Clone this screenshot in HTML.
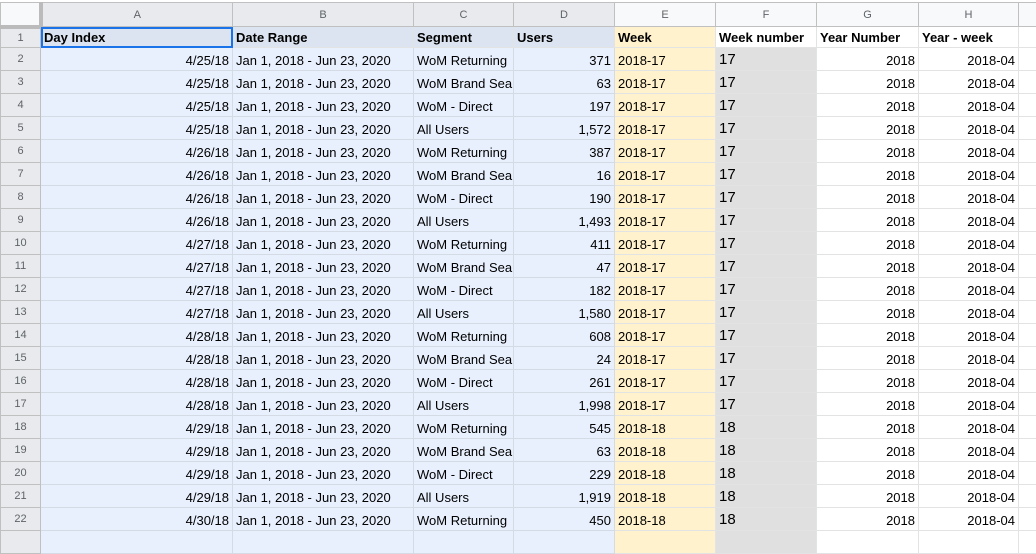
<!DOCTYPE html>
<html><head><meta charset="utf-8"><style>
html,body{margin:0;padding:0;background:#fff;overflow:hidden;width:1036px;height:536px}
table{border-collapse:collapse;table-layout:fixed;width:1048px;position:absolute;left:0;top:2px;font-family:"Liberation Sans",Arial,sans-serif;font-size:13px;color:#000}
td{border:1px solid #e2e3e3;padding:0 3px 2px 3px;height:23px;white-space:nowrap;overflow:hidden;box-sizing:border-box;vertical-align:bottom}
tr.h td{height:24px;background:#f8f9fa;color:#5f6368;font-size:11px;text-align:center;border-color:#c0c0c0;vertical-align:middle;padding:0}
tr.h td.s{background:#e8eaed}
td.rn{background:#e8eaed;color:#5f6368;font-size:11px;text-align:center;border-color:#c0c0c0;padding:0;vertical-align:middle}
tr.r1 td{height:21px;font-weight:bold}
tr.r1 td.ad{background:#dbe4f0}
td.a{background:#e8f0fe;text-align:right;border-color:#d5dbe5}
td.b,td.c{background:#e8f0fe;border-color:#d5dbe5}
td.d{background:#e8f0fe;text-align:right;border-color:#d5dbe5}
td.e{background:#fff2cc;border-left:1.5px solid #1a73e8}
td.f{background:#e0e0e0;font-size:15px;vertical-align:top;padding-top:3px}
td.g,td.hh{text-align:right}
.act{outline:2px solid #1a73e8;outline-offset:-2px}
</style></head><body>
<table>
<colgroup><col style="width:40px"><col style="width:192px"><col style="width:181px"><col style="width:100px"><col style="width:101px"><col style="width:101px"><col style="width:101px"><col style="width:102px"><col style="width:100px"><col style="width:30px"></colgroup>
<tr class="h"><td style="border-right:4px solid #bbb;border-bottom:4px solid #bbb;background:#f8f9fa"></td><td class="s">A</td><td class="s">B</td><td class="s">C</td><td class="s">D</td><td>E</td><td>F</td><td>G</td><td>H</td><td></td></tr>
<tr class="r1"><td class="rn" style="font-weight:normal">1</td><td class="ad act">Day Index</td><td class="ad">Date Range</td><td class="ad">Segment</td><td class="ad">Users</td><td style="background:#fff2cc;border-left:1.5px solid #1a73e8">Week</td><td>Week number</td><td>Year Number</td><td>Year - week</td><td></td></tr>
<tr><td class="rn">2</td><td class="a">4/25/18</td><td class="b">Jan 1, 2018 - Jun 23, 2020</td><td class="c">WoM Returning</td><td class="d">371</td><td class="e">2018-17</td><td class="f">17</td><td class="g">2018</td><td class="hh">2018-04</td><td></td></tr>
<tr><td class="rn">3</td><td class="a">4/25/18</td><td class="b">Jan 1, 2018 - Jun 23, 2020</td><td class="c">WoM Brand Search</td><td class="d">63</td><td class="e">2018-17</td><td class="f">17</td><td class="g">2018</td><td class="hh">2018-04</td><td></td></tr>
<tr><td class="rn">4</td><td class="a">4/25/18</td><td class="b">Jan 1, 2018 - Jun 23, 2020</td><td class="c">WoM - Direct</td><td class="d">197</td><td class="e">2018-17</td><td class="f">17</td><td class="g">2018</td><td class="hh">2018-04</td><td></td></tr>
<tr><td class="rn">5</td><td class="a">4/25/18</td><td class="b">Jan 1, 2018 - Jun 23, 2020</td><td class="c">All Users</td><td class="d">1,572</td><td class="e">2018-17</td><td class="f">17</td><td class="g">2018</td><td class="hh">2018-04</td><td></td></tr>
<tr><td class="rn">6</td><td class="a">4/26/18</td><td class="b">Jan 1, 2018 - Jun 23, 2020</td><td class="c">WoM Returning</td><td class="d">387</td><td class="e">2018-17</td><td class="f">17</td><td class="g">2018</td><td class="hh">2018-04</td><td></td></tr>
<tr><td class="rn">7</td><td class="a">4/26/18</td><td class="b">Jan 1, 2018 - Jun 23, 2020</td><td class="c">WoM Brand Search</td><td class="d">16</td><td class="e">2018-17</td><td class="f">17</td><td class="g">2018</td><td class="hh">2018-04</td><td></td></tr>
<tr><td class="rn">8</td><td class="a">4/26/18</td><td class="b">Jan 1, 2018 - Jun 23, 2020</td><td class="c">WoM - Direct</td><td class="d">190</td><td class="e">2018-17</td><td class="f">17</td><td class="g">2018</td><td class="hh">2018-04</td><td></td></tr>
<tr><td class="rn">9</td><td class="a">4/26/18</td><td class="b">Jan 1, 2018 - Jun 23, 2020</td><td class="c">All Users</td><td class="d">1,493</td><td class="e">2018-17</td><td class="f">17</td><td class="g">2018</td><td class="hh">2018-04</td><td></td></tr>
<tr><td class="rn">10</td><td class="a">4/27/18</td><td class="b">Jan 1, 2018 - Jun 23, 2020</td><td class="c">WoM Returning</td><td class="d">411</td><td class="e">2018-17</td><td class="f">17</td><td class="g">2018</td><td class="hh">2018-04</td><td></td></tr>
<tr><td class="rn">11</td><td class="a">4/27/18</td><td class="b">Jan 1, 2018 - Jun 23, 2020</td><td class="c">WoM Brand Search</td><td class="d">47</td><td class="e">2018-17</td><td class="f">17</td><td class="g">2018</td><td class="hh">2018-04</td><td></td></tr>
<tr><td class="rn">12</td><td class="a">4/27/18</td><td class="b">Jan 1, 2018 - Jun 23, 2020</td><td class="c">WoM - Direct</td><td class="d">182</td><td class="e">2018-17</td><td class="f">17</td><td class="g">2018</td><td class="hh">2018-04</td><td></td></tr>
<tr><td class="rn">13</td><td class="a">4/27/18</td><td class="b">Jan 1, 2018 - Jun 23, 2020</td><td class="c">All Users</td><td class="d">1,580</td><td class="e">2018-17</td><td class="f">17</td><td class="g">2018</td><td class="hh">2018-04</td><td></td></tr>
<tr><td class="rn">14</td><td class="a">4/28/18</td><td class="b">Jan 1, 2018 - Jun 23, 2020</td><td class="c">WoM Returning</td><td class="d">608</td><td class="e">2018-17</td><td class="f">17</td><td class="g">2018</td><td class="hh">2018-04</td><td></td></tr>
<tr><td class="rn">15</td><td class="a">4/28/18</td><td class="b">Jan 1, 2018 - Jun 23, 2020</td><td class="c">WoM Brand Search</td><td class="d">24</td><td class="e">2018-17</td><td class="f">17</td><td class="g">2018</td><td class="hh">2018-04</td><td></td></tr>
<tr><td class="rn">16</td><td class="a">4/28/18</td><td class="b">Jan 1, 2018 - Jun 23, 2020</td><td class="c">WoM - Direct</td><td class="d">261</td><td class="e">2018-17</td><td class="f">17</td><td class="g">2018</td><td class="hh">2018-04</td><td></td></tr>
<tr><td class="rn">17</td><td class="a">4/28/18</td><td class="b">Jan 1, 2018 - Jun 23, 2020</td><td class="c">All Users</td><td class="d">1,998</td><td class="e">2018-17</td><td class="f">17</td><td class="g">2018</td><td class="hh">2018-04</td><td></td></tr>
<tr><td class="rn">18</td><td class="a">4/29/18</td><td class="b">Jan 1, 2018 - Jun 23, 2020</td><td class="c">WoM Returning</td><td class="d">545</td><td class="e">2018-18</td><td class="f">18</td><td class="g">2018</td><td class="hh">2018-04</td><td></td></tr>
<tr><td class="rn">19</td><td class="a">4/29/18</td><td class="b">Jan 1, 2018 - Jun 23, 2020</td><td class="c">WoM Brand Search</td><td class="d">63</td><td class="e">2018-18</td><td class="f">18</td><td class="g">2018</td><td class="hh">2018-04</td><td></td></tr>
<tr><td class="rn">20</td><td class="a">4/29/18</td><td class="b">Jan 1, 2018 - Jun 23, 2020</td><td class="c">WoM - Direct</td><td class="d">229</td><td class="e">2018-18</td><td class="f">18</td><td class="g">2018</td><td class="hh">2018-04</td><td></td></tr>
<tr><td class="rn">21</td><td class="a">4/29/18</td><td class="b">Jan 1, 2018 - Jun 23, 2020</td><td class="c">All Users</td><td class="d">1,919</td><td class="e">2018-18</td><td class="f">18</td><td class="g">2018</td><td class="hh">2018-04</td><td></td></tr>
<tr><td class="rn">22</td><td class="a">4/30/18</td><td class="b">Jan 1, 2018 - Jun 23, 2020</td><td class="c">WoM Returning</td><td class="d">450</td><td class="e">2018-18</td><td class="f">18</td><td class="g">2018</td><td class="hh">2018-04</td><td></td></tr>
<tr><td class="rn"></td><td class="a"></td><td class="b"></td><td class="c"></td><td class="d"></td><td class="e"></td><td class="f"></td><td></td><td></td><td></td></tr>
</table>
</body></html>
